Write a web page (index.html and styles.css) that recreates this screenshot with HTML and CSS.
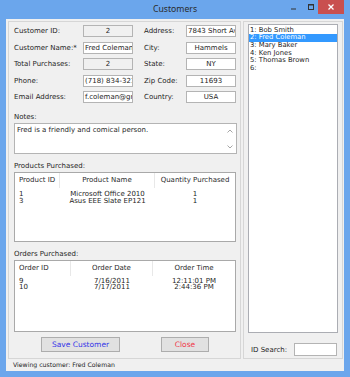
FILE: index.html
```html
<!DOCTYPE html>
<html>
<head>
<meta charset="utf-8">
<link rel="stylesheet" href="styles.css">
</head>
<body>
<div class="window">
  <div class="titlebar">
    <span class="title">Customers</span>
    <svg class="controls" width="56" height="14" viewBox="0 0 56 14">
      <rect x="3" y="8.5" width="5" height="1" fill="#333"/>
      <rect x="20.5" y="4.5" width="5" height="5" fill="none" stroke="#333" stroke-width="1"/>
      <rect x="20" y="4" width="6" height="1.5" fill="#333"/>
      <rect x="30" y="0" width="26" height="14" fill="#c9504f"/>
      <path d="M40.5 4.5 L45.5 9.5 M45.5 4.5 L40.5 9.5" stroke="#fff" stroke-width="1.3"/>
    </svg>
  </div>
  <div class="client">
    <div class="panes">
      <div class="left">
        <div class="form">
          <span class="lbl">Customer ID:</span>
          <div class="box ro c">2</div>
          <span class="lbl r">Address:</span>
          <div class="box">7843 Short Ave</div>

          <span class="lbl">Customer Name:*</span>
          <div class="box">Fred Coleman</div>
          <span class="lbl r">City:</span>
          <div class="box c">Hammels</div>

          <span class="lbl">Total Purchases:</span>
          <div class="box ro c">2</div>
          <span class="lbl r">State:</span>
          <div class="box c">NY</div>

          <span class="lbl">Phone:</span>
          <div class="box">(718) 834-3210</div>
          <span class="lbl r">Zip Code:</span>
          <div class="box c">11693</div>

          <span class="lbl">Email Address:</span>
          <div class="box">f.coleman@gmail.com</div>
          <span class="lbl r">Country:</span>
          <div class="box c">USA</div>
        </div>

        <div class="sect notes-label">Notes:</div>
        <div class="notes">
          <div class="notes-text">Fred is a friendly and comical person.</div>
          <div class="scroll">
            <svg width="6" height="4" viewBox="0 0 6 4"><path d="M0.5 3.5 L3 1 L5.5 3.5" fill="none" stroke="#a6a6a6" stroke-width="1"/></svg>
            <svg width="6" height="4" viewBox="0 0 6 4"><path d="M0.5 0.5 L3 3 L5.5 0.5" fill="none" stroke="#a6a6a6" stroke-width="1"/></svg>
          </div>
        </div>

        <div class="sect">Products Purchased:</div>
        <div class="lv lv-products">
          <div class="lv-head">
            <span class="l">Product ID</span>
            <span>Product Name</span>
            <span class="last">Quantity Purchased</span>
          </div>
          <div class="lv-body">
            <div class="lv-row"><span class="l">1</span><span>Microsoft Office 2010</span><span>1</span></div>
            <div class="lv-row"><span class="l">3</span><span>Asus EEE Slate EP121</span><span>1</span></div>
          </div>
        </div>

        <div class="sect">Orders Purchased:</div>
        <div class="lv lv-orders">
          <div class="lv-head">
            <span class="l">Order ID</span>
            <span>Order Date</span>
            <span class="last">Order Time</span>
          </div>
          <div class="lv-body">
            <div class="lv-row"><span class="l">9</span><span>7/16/2011</span><span>12:11:01 PM</span></div>
            <div class="lv-row"><span class="l">10</span><span>7/17/2011</span><span>2:44:36 PM</span></div>
          </div>
        </div>

        <div class="buttons">
          <div class="btn save">Save Customer</div>
          <div class="btn close">Close</div>
        </div>
      </div>

      <div class="right">
        <div class="listbox">
          <div class="item">1: Bob Smith</div>
          <div class="item sel">2: Fred Coleman</div>
          <div class="item">3: Mary Baker</div>
          <div class="item">4: Ken Jones</div>
          <div class="item">5: Thomas Brown</div>
          <div class="item">6:</div>
        </div>
        <div class="search">
          <span class="search-label">ID Search:</span>
          <div class="search-box"></div>
        </div>
      </div>
    </div>
    <div class="status">Viewing customer: Fred Coleman</div>
  </div>
</div>
</body>
</html>
```

FILE: styles.css
```css
* { box-sizing: border-box; }

body {
  margin: 0;
  width: 350px;
  height: 377px;
  overflow: hidden;
  font-family: "DejaVu Sans", sans-serif;
  font-size: 7px;
  color: #1e1e1e;
}

.window {
  width: 350px;
  height: 377px;
  background: #6ba6ec;
  padding: 0 6px 6px;
  display: flex;
  flex-direction: column;
}

.titlebar {
  height: 19px;
  flex: none;
  position: relative;
  text-align: center;
  font-family: "Noto Sans", sans-serif;
  font-size: 8.7px;
  line-height: 19px;
  color: #2a2a2a;
}

.controls {
  position: absolute;
  top: 0;
  right: 0;
  display: block;
}

.client {
  flex: 1;
  background: #f0f0f0;
  padding: 2px 0 0 2px;
  display: flex;
  flex-direction: column;
}

.panes {
  display: flex;
  gap: 2px;
  height: 338px;
  flex: none;
}

.left {
  width: 233px;
  border: 1px solid #d6d6d6;
  padding: 3px 0 0 5px;
}

.right {
  width: 100px;
  border: 1px solid #d6d6d6;
  padding: 2px 4px 0 4px;
}

.status {
  height: 12px;
  padding-left: 5px;
  font-size: 6.2px;
  line-height: 12px;
  color: #222;
}

/* form */
.form {
  display: grid;
  grid-template-columns: 69px 50px 53px 50px;
  grid-auto-rows: 12px;
  row-gap: 4.5px;
  align-items: center;
}

.lbl {
  line-height: 12px;
  white-space: nowrap;
}

.lbl.r { padding-left: 11px; }

.box {
  height: 12px;
  border: 1px solid #b4b4b4;
  background: #fff;
  line-height: 10px;
  padding: 0 1px;
  overflow: hidden;
  white-space: nowrap;
}

.box.ro { background: #f0f0f0; }
.box.c { text-align: center; }

.sect {
  margin-top: 8px;
  line-height: 8px;
  height: 8px;
}

.notes-label { margin-top: 10px; }

.notes {
  margin-top: 2px;
  width: 223px;
  height: 31px;
  border: 1px solid #b4b4b4;
  background: #fff;
  display: flex;
}

.notes-text {
  flex: 1;
  padding: 1.5px 2px;
  line-height: 8px;
}

.scroll {
  width: 12px;
  display: flex;
  flex-direction: column;
  justify-content: space-between;
  align-items: center;
  padding: 5px 0 4px;
}

.scroll svg { display: block; }

/* list views */
.lv {
  margin-top: 2px;
  width: 222px;
  border: 1px solid #a9a9a9;
  background: #fff;
}

.lv-products { height: 70px; }
.lv-orders { height: 72px; }

.lv-head,
.lv-row {
  display: grid;
}

.lv-products .lv-head,
.lv-products .lv-row { grid-template-columns: 45px 95px 80px; }

.lv-orders .lv-head,
.lv-orders .lv-row { grid-template-columns: 56px 82px 82px; }

.lv-head {
  height: 15px;
  line-height: 15px;
  color: #2a2a2a;
}

.lv-head span {
  text-align: center;
  border-right: 1px solid #e8e8e8;
  white-space: nowrap;
}

.lv-head span.last { border-right: none; }

.lv-head span.l,
.lv-row span.l {
  text-align: left;
  padding-left: 4px;
}

.lv-body { padding-top: 2.5px; }
.lv-orders .lv-body { padding-top: 1.5px; }

.lv-row {
  height: 7px;
  line-height: 7px;
}

.lv-orders .lv-row {
  height: 6.6px;
  line-height: 6.6px;
}

.lv-row span {
  text-align: center;
  white-space: nowrap;
}

/* buttons */
.buttons {
  margin-top: 5px;
  display: flex;
  padding-left: 27px;
  gap: 41px;
}

.btn {
  height: 15px;
  border: 1px solid #adadad;
  background: #e1e1e1;
  line-height: 13px;
  text-align: center;
  font-size: 7.5px;
}

.btn.save { width: 79px; color: #3535e8; }
.btn.close { width: 48px; color: #f0384a; }

/* right pane list */
.listbox {
  width: 90px;
  height: 309px;
  border: 1px solid #abadb3;
  background: #fff;
  padding-top: 1.5px;
  font-size: 6.8px;
}

.item {
  height: 7.7px;
  line-height: 7.7px;
  padding-left: 1px;
  white-space: nowrap;
}

.item.sel {
  background: #3399ff;
  color: #fff;
}

.search {
  margin-top: 10px;
  display: flex;
  align-items: center;
  padding-left: 3px;
}

.search-box {
  margin-left: auto;
  margin-right: 1px;
  width: 43px;
  height: 13px;
  border: 1px solid #b4b4b4;
  background: #fff;
}
```
